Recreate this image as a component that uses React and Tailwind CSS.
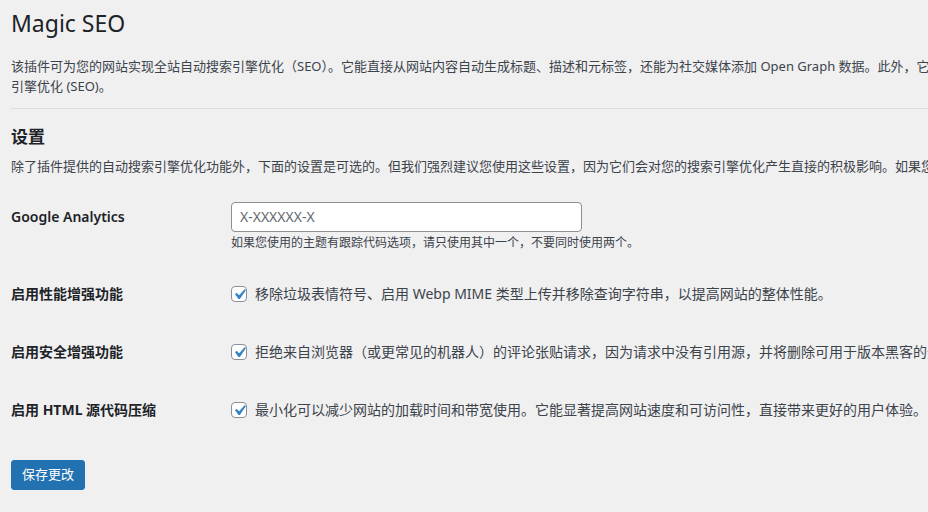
import React from 'react'

const font = { fontFamily: '"Noto Sans", "Noto Sans CJK SC", sans-serif' }

function Check() {
  return (
    <span className="relative inline-block h-4 w-4 shrink-0 rounded-[4px] border border-[#8c8f94] bg-white">
      <svg viewBox="0 0 20 20" className="absolute -left-[3px] -top-[3px] h-[21px] w-[21px]">
        <path d="M14.83 4.89l1.34.94-5.81 8.38H9.02L5.78 9.67l1.34-1.25 2.57 2.4z" fill="#3582c4" />
      </svg>
    </span>
  )
}

function CheckRow({ label, text, className = '' }) {
  return (
    <div className={`flex h-5 items-center ${className}`}>
      <div className="w-[220px] shrink-0 text-[14px] font-bold text-[#1d2327]">{label}</div>
      <div className="flex items-center gap-2 whitespace-nowrap text-[14px] text-[#3c434a]">
        <Check />
        <span>{text}</span>
      </div>
    </div>
  )
}

export default function App() {
  return (
    <div className="h-[512px] w-full overflow-hidden bg-[#f0f0f1]" style={font}>
      <div className="w-[1400px] pl-[11px] pt-[9px]">
        <h1 className="text-[23px] font-normal leading-[29px] text-[#1d2327]">Magic SEO</h1>

        <p className="mt-[19px] text-[13px] leading-[19.5px] text-[#3c434a]">
          <span className="block whitespace-nowrap">
            该插件可为您的网站实现全站自动搜索引擎优化（SEO）。它能直接从网站内容自动生成标题、描述和元标签，还能为社交媒体添加 Open Graph 数据。此外，它还会自动生成站点地图，帮助搜索
          </span>
          <span className="block whitespace-nowrap">引擎优化 (SEO)。</span>
        </p>

        <div className="mt-3 border-t border-[#dcdcde]" />

        <h2 className="mt-4 text-[17px] font-bold leading-6 text-[#1d2327]">设置</h2>
        <p className="mt-2 whitespace-nowrap text-[13px] leading-[19.5px] text-[#3c434a]">
          除了插件提供的自动搜索引擎优化功能外，下面的设置是可选的。但我们强烈建议您使用这些设置，因为它们会对您的搜索引擎优化产生直接的积极影响。如果您不需要，可以保持默认。
        </p>

        <div className="mt-[25px] flex">
          <div className="flex h-[30px] w-[220px] shrink-0 items-center text-[14px] font-semibold text-[#1d2327]">
            Google Analytics
          </div>
          <div>
            <input
              type="text"
              placeholder="X-XXXXXX-X"
              className="h-[30px] w-[351px] rounded-[4px] border border-[#8c8f94] bg-white px-2 text-[14px] text-[#2c3338] outline-none placeholder:text-[#646970]"
            />
            <p className="mt-[2px] whitespace-nowrap text-[12px] leading-[18px] text-[#3c434a]">
              如果您使用的主题有跟踪代码选项，请只使用其中一个，不要同时使用两个。
            </p>
          </div>
        </div>

        <CheckRow
          className="mt-[32px]"
          label="启用性能增强功能"
          text="移除垃圾表情符号、启用 Webp MIME 类型上传并移除查询字符串，以提高网站的整体性能。"
        />
        <CheckRow
          className="mt-[38px]"
          label="启用安全增强功能"
          text="拒绝来自浏览器（或更常见的机器人）的评论张贴请求，因为请求中没有引用源，并将删除可用于版本黑客的元数据。"
        />
        <CheckRow
          className="mt-[38px]"
          label="启用 HTML 源代码压缩"
          text="最小化可以减少网站的加载时间和带宽使用。它能显著提高网站速度和可访问性，直接带来更好的用户体验。"
        />

        <button className="mt-[40px] h-[30px] rounded-[3px] border border-[#2271b1] bg-[#2271b1] px-[10px] text-[13px] text-white">
          保存更改
        </button>
      </div>
    </div>
  )
}
